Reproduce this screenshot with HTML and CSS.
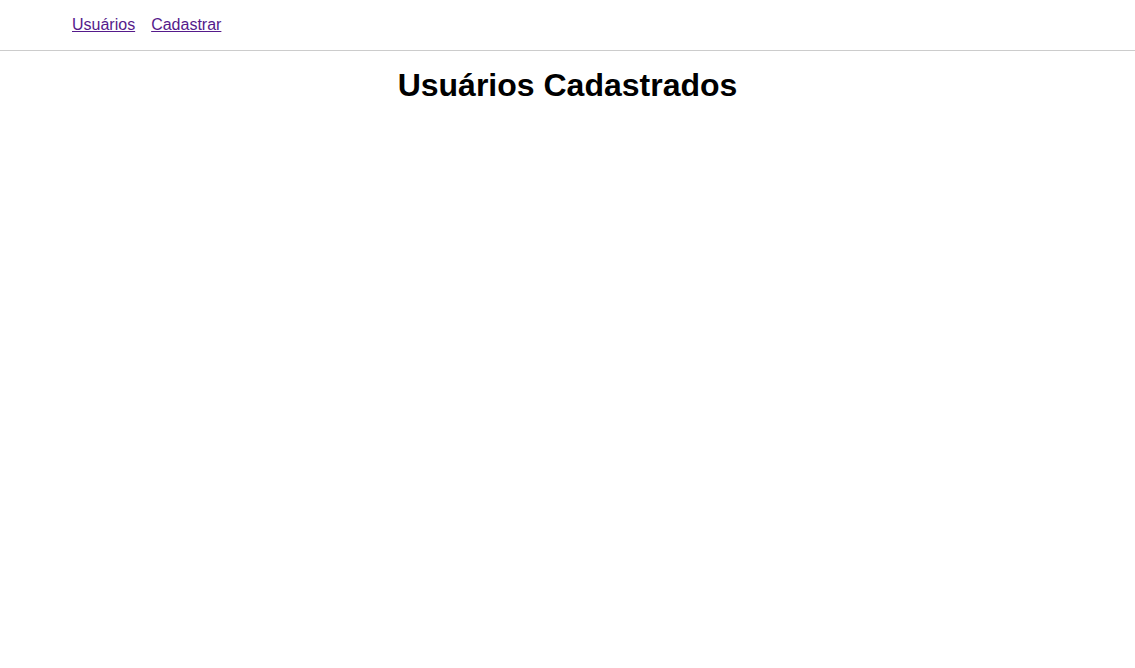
FILE: index.html
```html
<!DOCTYPE html>
<html lang="pt-BR">
<head>
<meta charset="utf-8">
<title>Usuários</title>
<link rel="stylesheet" href="styles.css">
</head>
<body>
<nav class="topnav">
  <a class="navlink" href="#">Usuários</a>
  <a class="navlink" href="#">Cadastrar</a>
</nav>
<main class="content">
  <h1 class="title">Usuários Cadastrados</h1>
</main>
</body>
</html>
```
FILE: styles.css
```css
html, body {
  margin: 0;
  padding: 0;
  background: #ffffff;
  font-family: "Liberation Sans", Arial, sans-serif;
}
.topnav {
  display: flex;
  gap: 16px;
  padding: 16px 72px 16px;
  border-bottom: 1px solid #cccccc;
  font-size: 16px;
  line-height: 18px;
}
.navlink {
  color: #551a8b;
  text-decoration: underline;
}
.content {
  text-align: center;
}
.title {
  font-size: 32px;
  font-weight: bold;
  margin: 16px 0;
  color: #000;
}
```
